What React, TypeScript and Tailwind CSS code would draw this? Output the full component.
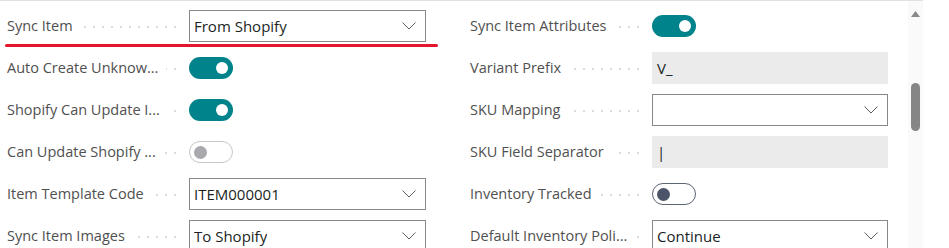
import React from 'react'

type Field =
  | { label: string; kind: 'select'; value: string }
  | { label: string; kind: 'text'; value: string }
  | { label: string; kind: 'toggle'; on: boolean; variant?: 'disabled' | 'dark' }

// labels are written as the page shows them (already shortened)
const leftFields: Field[] = [
  { label: 'Sync Item', kind: 'select', value: 'From Shopify' },
  { label: 'Auto Create Unknow...', kind: 'toggle', on: true },
  { label: 'Shopify Can Update I...', kind: 'toggle', on: true },
  { label: 'Can Update Shopify ...', kind: 'toggle', on: false, variant: 'disabled' },
  { label: 'Item Template Code', kind: 'select', value: 'ITEM000001' },
  { label: 'Sync Item Images', kind: 'select', value: 'To Shopify' },
]

const rightFields: Field[] = [
  { label: 'Sync Item Attributes', kind: 'toggle', on: true },
  { label: 'Variant Prefix', kind: 'text', value: 'V_' },
  { label: 'SKU Mapping', kind: 'select', value: '' },
  { label: 'SKU Field Separator', kind: 'text', value: '|' },
  { label: 'Inventory Tracked', kind: 'toggle', on: false, variant: 'dark' },
  { label: 'Default Inventory Poli...', kind: 'select', value: 'Continue' },
]

function Chevron() {
  return (
    <svg width="14" height="8" viewBox="0 0 14 8" className="shrink-0">
      <polyline points="0.5,0.5 7,7 13.5,0.5" fill="none" stroke="#605e5c" strokeWidth="1" />
    </svg>
  )
}

function Leader() {
  return (
    <div className="flex-1 min-w-0 flex justify-end items-center overflow-hidden h-[4px] ml-2 mt-[2px]">
      {Array.from({ length: 20 }).map((_, i) => (
        <span key={i} className="shrink-0 w-[9px] flex justify-end">
          <span className="block w-[2px] h-[2px] rounded-full bg-[#cfcfcf]" />
        </span>
      ))}
    </div>
  )
}

function Toggle({ on, variant }: { on: boolean; variant?: 'disabled' | 'dark' }) {
  if (on) {
    return (
      <div className="w-[44px] h-[22px] rounded-full bg-[#00838a] flex items-center justify-end pr-[5px]">
        <span className="w-[12px] h-[12px] rounded-full bg-white" />
      </div>
    )
  }
  const dark = variant === 'dark'
  return (
    <div
      className={
        dark
          ? 'w-[44px] h-[22px] rounded-full border border-[#5c6373] bg-white flex items-center pl-[4px]'
          : 'w-[44px] h-[22px] rounded-full border border-[#c8c6c4] bg-white flex items-center pl-[4px]'
      }
    >
      <span className={dark ? 'w-[13px] h-[13px] rounded-full bg-[#4b5468]' : 'w-[13px] h-[13px] rounded-full bg-[#a8a8ad]'} />
    </div>
  )
}

function Control({ field, width }: { field: Field; width: string }) {
  if (field.kind === 'toggle') return <Toggle on={field.on} variant={field.variant} />
  if (field.kind === 'text') {
    return (
      <div className={`${width} h-[32px] bg-[#ebebec] flex items-center px-[5px] text-[15px] text-[#201f1e]`}>
        {field.value}
      </div>
    )
  }
  return (
    <div className={`${width} h-[32px] border border-[#8a8886] bg-white flex items-center justify-between pl-[4px] pr-[9px] text-[15px] text-[#201f1e]`}>
      <span className="truncate">{field.value}</span>
      <Chevron />
    </div>
  )
}

function Column({ fields, width }: { fields: Field[]; width: string }) {
  return (
    <div className="flex flex-col">
      {fields.map((f) => (
        <div key={f.label} className="h-[42px] flex items-center">
          <div className="w-[170px] flex items-center pr-[1px]">
            <span className="whitespace-nowrap text-[#505050]">{f.label}</span>
            <Leader />
          </div>
          <div className="ml-[12px]">
            <Control field={f} width={width} />
          </div>
        </div>
      ))}
    </div>
  )
}

export default function App() {
  return (
    <div
      className="relative w-[949px] h-[248px] overflow-hidden bg-white text-[14.5px]"
      style={{ fontFamily: '"Open Sans", "Noto Sans", sans-serif' }}
    >
      <div className="flex w-[923px] h-full border-t border-[#e1e1e1]">
        {/* Form columns */}
        <div className="flex w-[908px] pt-[4px]">
          <div className="w-[470px] pl-[7px]">
            <Column fields={leftFields} width="w-[237px]" />
          </div>
          <div className="flex-1">
            <Column fields={rightFields} width="w-[236px]" />
          </div>
        </div>

        {/* Scrollbar */}
        <div className="w-[15px] h-full bg-[#fafafa] flex flex-col items-center pt-[10px]">
          <svg width="9" height="6" viewBox="0 0 9 6">
            <polygon points="4.5,0 9,6 0,6" fill="#8a8a8a" />
          </svg>
          <div className="mt-[66px] w-[9px] h-[48px] rounded-full bg-[#868686]" />
        </div>
      </div>

      {/* Red highlight under the first row */}
      <div className="absolute left-[5px] top-[44px] w-[433px] h-[3px] rounded-full bg-[#e3162e]" />
    </div>
  )
}
